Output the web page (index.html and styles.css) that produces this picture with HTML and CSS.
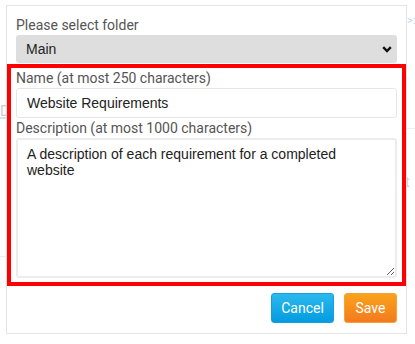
FILE: index.html
```html
<!DOCTYPE html>
<html lang="en">
<head>
  <meta charset="UTF-8" />
  <meta name="viewport" content="width=device-width, initial-scale=1.0" />
  <title>New Requirement</title>
  <link rel="stylesheet" href="styles.css">
</head>
<body>
  <!-- page behind the dialog, mostly hidden -->
  <div class="backdrop">
    <span class="ghost ghost-arrow">&gt;:</span>
    <span class="ghost ghost-d">D</span>
    <span class="ghost-line line-blue"></span>
    <span class="ghost-line line-right"></span>
    <span class="ghost ghost-t">t</span>
    <span class="ghost-line line-left"></span>
  </div>

  <div class="dialog">
    <label class="field-label" for="folderSelect">Please select folder</label>
    <div class="select-wrap">
      <select id="folderSelect" class="folder-select">
        <option>Main</option>
      </select>
      <svg class="select-arrow" width="10" height="7" viewBox="0 0 10 7">
        <path d="M1.2 1.2 L5 5 L8.8 1.2" fill="none" stroke="#111" stroke-width="2.4" />
      </svg>
    </div>

    <div class="highlight">
      <label class="field-label" for="nameInput">Name (at most 250 characters)</label>
      <input id="nameInput" class="text-input" type="text" value="Website Requirements" />

      <label class="field-label" for="descInput">Description (at most 1000 characters)</label>
      <textarea id="descInput" class="text-area">A description of each requirement for a completed website</textarea>
    </div>

    <div class="actions">
      <button class="btn btn-cancel">Cancel</button>
      <button class="btn btn-save">Save</button>
    </div>
  </div>
</body>
</html>
```

FILE: styles.css
```css
body {
  margin: 0;
  background: #fff;
  font-family: Roboto, "Liberation Sans", sans-serif;
  width: 415px;
  height: 344px;
  overflow: hidden;
  position: relative;
}

.ghost {
  position: absolute;
  font-size: 14px;
  line-height: 14px;
  color: #c9ced3;
}

.ghost-arrow {
  left: 407px;
  top: 14px;
  font-size: 11px;
  color: #b9d6ee;
}

.ghost-d {
  left: 0;
  top: 104px;
}

.ghost-t {
  left: 405px;
  top: 175px;
}

.ghost-line {
  position: absolute;
  height: 1px;
  background: #eee;
}

.line-blue {
  left: 0;
  top: 117px;
  width: 6px;
  height: 2px;
  background: #cfe4f3;
}

.line-right {
  left: 407px;
  top: 128px;
  width: 8px;
}

.line-left {
  left: 0;
  top: 256px;
  width: 6px;
}

.dialog {
  position: absolute;
  left: 6px;
  top: 5px;
  width: 401px;
  box-sizing: border-box;
  background: #fff;
  border: 1px solid #e4e4e4;
  padding: 9px 9px 10px;
}

.field-label {
  display: block;
  font-size: 14px;
  line-height: 20px;
  color: #555;
}

.select-wrap {
  position: relative;
  margin-bottom: 1px;
}

.folder-select {
  display: block;
  width: 100%;
  height: 28px;
  -webkit-appearance: none;
  appearance: none;
  border: none;
  border-radius: 3px;
  background: #dedede;
  padding: 0 10px;
  font-family: "Liberation Sans", Arial, sans-serif;
  font-size: 14px;
  color: #222;
}

.select-arrow {
  position: absolute;
  right: 5px;
  top: 11px;
}

.highlight {
  margin: 0 -9px;
  padding: 0 5px 4px;
  border: 4px solid #ff0000;
}

.text-input,
.text-area {
  display: block;
  width: 100%;
  box-sizing: border-box;
  font-family: "Liberation Sans", Arial, sans-serif;
  font-size: 14px;
  color: #222;
  background: #fff;
  border-radius: 3px;
}

.text-input {
  height: 30px;
  border: 1px solid #e6e6e6;
  padding: 0 10px;
}

.text-area {
  height: 140px;
  border: 2px solid #ececec;
  padding: 6px 9px;
  line-height: 16px;
  resize: vertical;
}

.actions {
  display: flex;
  justify-content: flex-end;
  gap: 10px;
  margin-top: 7px;
}

.btn {
  height: 30px;
  padding: 0 6px;
  border-radius: 3px;
  font-family: inherit;
  font-size: 14px;
  color: #fff;
  cursor: pointer;
}

.btn-cancel {
  width: 63px;
  border: 1px solid #169fda;
  background: linear-gradient(#2cb8ef, #039ce0);
}

.btn-save {
  width: 53px;
  border: 1px solid #f5a23a;
  background: linear-gradient(#f9a31a, #f47a20);
}
```
